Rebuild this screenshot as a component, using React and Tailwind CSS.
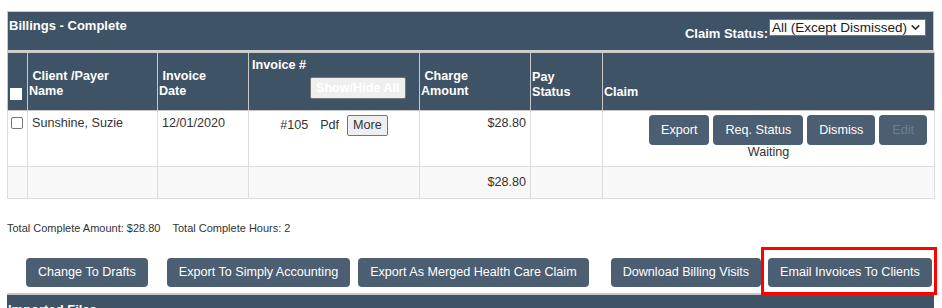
import React from 'react';
import { ChevronDown } from 'lucide-react';

const HEAD = 'bg-[#3f5367]';
const BTN = 'bg-[#4c5e71] text-white rounded-[4px] text-[12.6px] leading-[15px] whitespace-nowrap';

const ActionButton = ({ children, className = '' }) => (
    <button className={`${BTN} h-[29px] px-[12px] ${className}`}>{children}</button>
);

export default function App() {
    return (
        <div className="w-[942px] h-[308px] overflow-hidden bg-white text-[#333] font-['Liberation_Sans',Arial,sans-serif]">
            <div className="ml-[7px] mt-[11px] w-[927px]">
                {/* title bar */}
                <div className={`${HEAD} h-[41px] border border-[#c8c8c8] border-b-[2px] border-b-[#d0d0d0] flex justify-between items-start`}>
                    <div className="text-white font-bold text-[13px] leading-[15px] pt-[6px] pl-[1px]">Billings - Complete</div>
                    <div className="flex items-start pt-[7px] pr-[7px]">
                        <span className="text-white font-bold text-[13px] leading-[15px] mt-[7px] mr-[1px] whitespace-nowrap">Claim Status:</span>
                        <div className="bg-white border border-[#767676] h-[17px] w-[157px] flex items-center justify-between pl-[2px] pr-[3px] text-[13.5px] leading-[15px] text-[#1a1a1a] whitespace-nowrap overflow-hidden">
                            <span>All (Except Dismissed)</span>
                            <ChevronDown size={13} strokeWidth={3} className="text-[#333] shrink-0" />
                        </div>
                    </div>
                </div>

                <table className="w-[927px] border-collapse table-fixed text-[12.6px] leading-[15px]">
                    <colgroup>
                        <col className="w-[20px]" />
                        <col className="w-[130px]" />
                        <col className="w-[91px]" />
                        <col className="w-[171px]" />
                        <col className="w-[111px]" />
                        <col className="w-[72px]" />
                        <col className="w-[332px]" />
                    </colgroup>
                    <thead>
                        <tr className={`${HEAD} text-white font-bold text-left h-[58px]`}>
                            <th className="border border-[#c8c8c8] align-bottom pb-[10px] px-[1px]">
                                <span className="block w-[12px] h-[12px] bg-white ml-[1px]"></span>
                            </th>
                            <th className="border border-[#c8c8c8] align-bottom pb-[11px] px-[1px] font-bold">&nbsp;Client /Payer<br />Name</th>
                            <th className="border border-[#c8c8c8] align-bottom pb-[11px] px-[1px] font-bold">&nbsp;Invoice<br />Date</th>
                            <th className="border border-[#c8c8c8] align-bottom pb-[11px] px-[3px] font-bold">
                                <div>Invoice #</div>
                                <div className="pl-[58px] mt-[4px]">
                                    <span className="inline-block bg-[#efefef] border border-[#767676] rounded-[2px] text-white leading-[20px] px-[5px] whitespace-nowrap">Show/Hide All</span>
                                </div>
                            </th>
                            <th className="border border-[#c8c8c8] align-bottom pb-[11px] px-[1px] font-bold">&nbsp;Charge<br />Amount</th>
                            <th className="border border-[#c8c8c8] align-bottom pb-[10px] px-[1px] font-bold">Pay<br />Status</th>
                            <th className="border border-[#c8c8c8] align-bottom pb-[10px] px-[1px] font-bold">Claim</th>
                        </tr>
                    </thead>
                    <tbody>
                        <tr className="bg-white h-[55px]">
                            <td className="border border-[#ddd] align-top pt-[5px] pl-[3px]">
                                <span className="block w-[12px] h-[12px] border border-[#767676] rounded-[2px] bg-white mt-[1px]"></span>
                            </td>
                            <td className="border border-[#ddd] align-top pt-[5px] px-[4px]">Sunshine, Suzie</td>
                            <td className="border border-[#ddd] align-top pt-[5px] px-[4px]">12/01/2020</td>
                            <td className="border border-[#ddd] align-top pt-[4px] text-center whitespace-nowrap">
                                <span className="mr-[12px]">#105</span>
                                <span className="mr-[8px]">Pdf</span>
                                <span className="inline-block bg-[#efefef] border border-[#767676] rounded-[2px] text-[#333] leading-[19px] px-[5px]">More</span>
                            </td>
                            <td className="border border-[#ddd] align-top pt-[5px] px-[4px] text-right">$28.80</td>
                            <td className="border border-[#ddd]"></td>
                            <td className="border border-[#ddd] align-top pt-[4px] pb-[6px] text-center">
                                <div className="flex justify-end gap-[4px] pr-[7px]">
                                    <ActionButton className="h-[30px]">Export</ActionButton>
                                    <ActionButton className="h-[30px]">Req. Status</ActionButton>
                                    <ActionButton className="h-[30px]">Dismiss</ActionButton>
                                    <ActionButton className="h-[30px] !text-[#6f7e8c] !px-[13px]">Edit</ActionButton>
                                </div>
                                <div className="text-[#333]">Waiting</div>
                            </td>
                        </tr>
                        <tr className="bg-[#f8f8f8] h-[32px]">
                            <td className="border border-[#ddd]"></td>
                            <td className="border border-[#ddd]"></td>
                            <td className="border border-[#ddd]"></td>
                            <td className="border border-[#ddd]"></td>
                            <td className="border border-[#ddd] align-top pt-[8px] px-[4px] text-right">$28.80</td>
                            <td className="border border-[#ddd]"></td>
                            <td className="border border-[#ddd]"></td>
                        </tr>
                    </tbody>
                </table>

                <div className="mt-[23px] text-[11px] leading-[13px] text-[#333]">
                    Total Complete Amount: $28.80<span className="ml-[12px]">Total Complete Hours: 2</span>
                </div>

                <div className="mt-[12px] flex items-start h-[46px] pt-[11px]">
                    <ActionButton className="ml-[19px]">Change To Drafts</ActionButton>
                    <ActionButton className="ml-[19px]">Export To Simply Accounting</ActionButton>
                    <ActionButton className="ml-[8px]">Export As Merged Health Care Claim</ActionButton>
                    <ActionButton className="ml-[22px]">Download Billing Visits</ActionButton>
                    <span className="relative ml-[7px]">
                        <ActionButton>Email Invoices To Clients</ActionButton>
                        <span className="absolute left-[-7px] right-[-5px] top-[-11px] bottom-[-8px] border-[3px] border-[#ff0000] z-10 pointer-events-none"></span>
                    </span>
                </div>

                <div className={`${HEAD} h-[20px] border-t-[2px] border-[#c8c8c8] text-white font-bold text-[13px] leading-[15px] pt-[7px] pl-[1px]`}>
                    Imported Files
                </div>
            </div>
        </div>
    );
}
